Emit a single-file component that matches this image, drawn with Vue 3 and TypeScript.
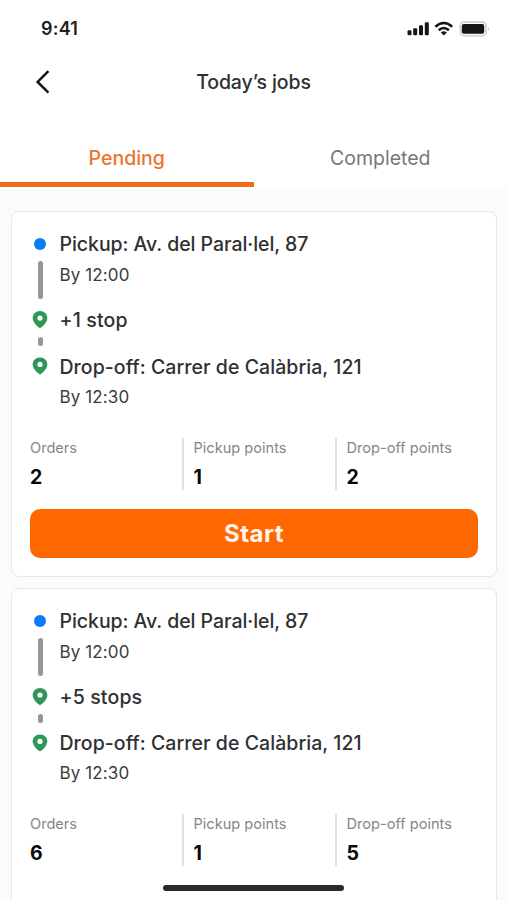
<script setup lang="ts">
import { ref } from 'vue'

interface Job {
  id: number
  pickup: string
  pickupBy: string
  stops: string
  dropoff: string
  dropoffBy: string
  startable: boolean
  stats: { label: string; value: number }[]
}

const tabs = ['Pending', 'Completed']
const activeTab = ref('Pending')

function makeJob(id: number, stops: string, orders: number, pickups: number, dropoffs: number): Job {
  return {
    id,
    pickup: 'Pickup: Av. del Paral·lel, 87',
    pickupBy: 'By 12:00',
    stops,
    dropoff: 'Drop-off: Carrer de Calàbria, 121',
    dropoffBy: 'By 12:30',
    // Only the first job in the queue can be started
    startable: id === 1,
    stats: [
      { label: 'Orders', value: orders },
      { label: 'Pickup points', value: pickups },
      { label: 'Drop-off points', value: dropoffs },
    ],
  }
}

const jobs: Job[] = [makeJob(1, '+1 stop', 2, 1, 2), makeJob(2, '+5 stops', 6, 1, 5)]
</script>

<template>
  <div class="screen">
    <div class="status">
      <span class="time">9:41</span>
      <svg class="indicators" width="84" height="18" viewBox="0 0 84 18">
        <g fill="#151515">
          <rect x="1.5" y="10.3" width="4" height="5" rx="1.2" />
          <rect x="7.2" y="8.2" width="4" height="7.1" rx="1.2" />
          <rect x="13" y="5.3" width="4" height="10" rx="1.2" />
          <rect x="18.8" y="2.2" width="4" height="13.1" rx="1.2" />
        </g>
        <g fill="none" stroke="#151515" stroke-width="2.5">
          <path d="M29.4 6.8Q37.8 -.8 46.2 6.8" />
          <path d="M32.7 10.2Q37.8 5.7 42.9 10.2" />
        </g>
        <path d="M34.8 12.6Q37.8 10.1 40.8 12.6L37.8 15.5Z" fill="#151515" />
        <rect x="54.3" y="2" width="25.8" height="13.8" rx="4" fill="#fff" stroke="#d6d6d6" stroke-width="1.9" />
        <rect x="55.8" y="3.9" width="22.4" height="9.8" rx="2" fill="#151515" />
        <path d="M82 6.9Q83.6 8.9 82 10.9Z" fill="#aaa" />
      </svg>
    </div>

    <header class="header">
      <button class="back" aria-label="Back">
        <svg width="16" height="26" viewBox="0 0 16 26">
          <path d="M13.4 2.2L2.6 12.9L13.4 23.6" fill="none" stroke="#111" stroke-width="2.4" />
        </svg>
      </button>
      <h1 class="title">Today’s jobs</h1>
    </header>

    <nav class="tabs">
      <button
        v-for="tab in tabs"
        :key="tab"
        class="tab"
        :class="{ active: tab === activeTab }"
        @click="activeTab = tab"
      >
        {{ tab }}
      </button>
    </nav>

    <main class="jobs">
      <article v-for="job in jobs" :key="job.id" class="card">
        <div class="route">
          <div class="track">
            <span class="dot"></span>
            <span class="line long"></span>
            <svg class="pin" width="16" height="18" viewBox="0 0 16 18">
              <path d="M8 .1C3.8.1.7 3.1.7 7c0 4.1 3.6 7.7 7.3 10.3 3.7-2.6 7.3-6.2 7.3-10.3C15.3 3.1 12.2.1 8 .1Z" fill="#2e9657" />
              <circle cx="8" cy="7.1" r="2.6" fill="#fff" />
            </svg>
            <span class="line short"></span>
            <svg class="pin" width="16" height="18" viewBox="0 0 16 18">
              <path d="M8 .4C3.8.4.7 3.4.7 7.3c0 4.1 3.6 7.7 7.3 10.3 3.7-2.6 7.3-6.2 7.3-10.3C15.3 3.4 12.2.4 8 .4Z" fill="#2e9657" />
              <circle cx="8" cy="7.4" r="2.6" fill="#fff" />
            </svg>
          </div>
          <div class="stops">
            <div class="place pickup">{{ job.pickup }}</div>
            <div class="by">{{ job.pickupBy }}</div>
            <div class="place via">{{ job.stops }}</div>
            <div class="place drop">{{ job.dropoff }}</div>
            <div class="by">{{ job.dropoffBy }}</div>
          </div>
        </div>
        <div class="stats">
          <div v-for="stat in job.stats" :key="stat.label" class="stat">
            <div class="label">{{ stat.label }}</div>
            <div class="value">{{ stat.value }}</div>
          </div>
        </div>
        <button v-if="job.startable" class="start">Start</button>
      </article>
    </main>
    <div class="home"></div>
  </div>
</template>

<style>
body {
  margin: 0;
  overflow: hidden;
}
</style>

<style scoped>
.screen {
  position: relative;
  display: flex;
  flex-direction: column;
  width: 507px;
  height: 900px;
  overflow: hidden;
  background: #fff;
  color: #303033;
  font-family: Inter, 'Liberation Sans', sans-serif;
}
button {
  border: 0;
  padding: 0;
  background: none;
  font: inherit;
  color: inherit;
}
.status {
  display: flex;
  flex: none;
  justify-content: space-between;
  height: 56px;
  padding: 0 17px 0 41px;
  box-sizing: border-box;
}
.time {
  padding-top: 17px;
  font-size: 18px;
  line-height: 24px;
  font-weight: 600;
  letter-spacing: 0.2px;
  color: #222;
}
.indicators {
  margin-top: 20px;
}
.header {
  display: grid;
  flex: none;
  grid-template-columns: 60px 1fr 60px;
  align-items: center;
  height: 52px;
}
.back {
  display: flex;
  padding-left: 35px;
}
.title {
  margin: 0;
  text-align: center;
  font-size: 19.5px;
  line-height: 24px;
  font-weight: 500;
  letter-spacing: -0.1px;
}
.tabs {
  display: grid;
  flex: none;
  grid-template-columns: 1fr 1fr;
  height: 79px;
  margin-bottom: 1px;
}
.tab {
  padding-top: 26px;
  border-bottom: 5px solid transparent;
  font-size: 19.5px;
  line-height: 24px;
  color: #77777a;
}
.tab.active {
  border-color: #f26a1b;
  color: #e97531;
  font-weight: 500;
}
.jobs {
  display: flex;
  flex: 1;
  flex-direction: column;
  gap: 10.6px;
  min-height: 0;
  padding: 23px 10px 0 11px;
  background: #fbfbfb;
}
.card {
  flex: none;
  height: 366px;
  box-sizing: border-box;
  padding: 20px 18px 0;
  border: 1px solid #e8e8e9;
  border-radius: 8px;
  background: #fff;
}
.route {
  display: grid;
  grid-template-columns: 20px 1fr;
  column-gap: 9.5px;
}
.track {
  display: flex;
  flex-direction: column;
  align-items: center;
}
.dot {
  width: 12px;
  height: 12px;
  margin-top: 6px;
  border-radius: 50%;
  background: #087cf9;
}
.line {
  width: 5px;
  border-radius: 3px;
  background: #969698;
}
.long {
  height: 38px;
  margin: 11px 0 12px;
}
.short {
  height: 9px;
  margin: 8px 0 11px;
}
.pin {
  display: block;
}
.place {
  font-size: 19.5px;
  line-height: 24px;
  font-weight: 500;
  letter-spacing: 0.05px;
}
.place.pickup {
  letter-spacing: -0.05px;
}
.by {
  margin-top: 7px;
  font-size: 17px;
  line-height: 24px;
  letter-spacing: 0.12px;
  color: #3c3c3f;
}
.via {
  margin-top: 21px;
  letter-spacing: 0.15px;
}
.drop {
  margin-top: 22.6px;
}
.drop + .by {
  margin-top: 6px;
}
.stats {
  display: grid;
  grid-template-columns: 152px 153px 1fr;
  margin-top: 29px;
}
.stat {
  height: 52px;
  padding-left: 9.5px;
  border-left: 2px solid #e0e0e2;
  box-sizing: border-box;
}
.stat:first-child {
  padding-left: 0;
  border-left: 0;
}
.label {
  font-size: 14.6px;
  line-height: 20px;
  color: #858587;
}
.value {
  margin-top: 7px;
  font-size: 19.5px;
  line-height: 24px;
  font-weight: 700;
  color: #080808;
}
.start {
  display: block;
  width: 448px;
  height: 49px;
  margin-top: 19px;
  border-radius: 10px;
  background: #ff6700;
  color: #fff5e8;
  font-size: 24px;
  font-weight: 700;
  letter-spacing: 0.5px;
}
.home {
  position: absolute;
  bottom: 9px;
  left: 163px;
  width: 181px;
  height: 6px;
  border-radius: 3px;
  background: #29292a;
}
</style>
